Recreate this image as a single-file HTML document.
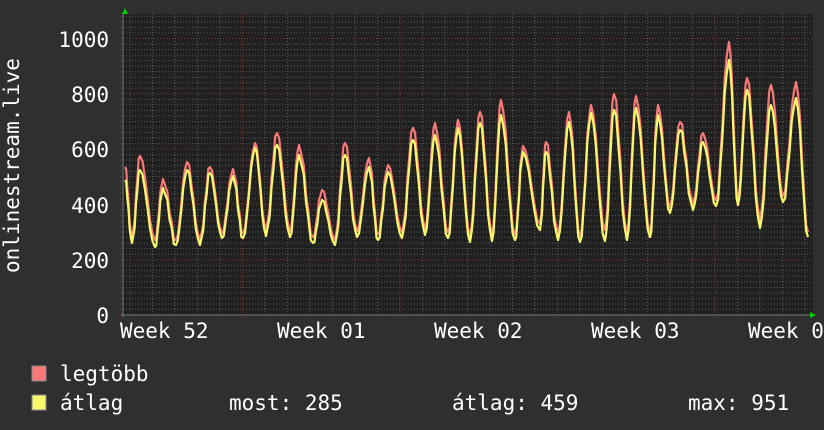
<!DOCTYPE html>
<html><head><meta charset="utf-8"><style>
html,body{margin:0;padding:0;background:#2f2f2f;}
svg{display:block;}
text{font-family:"DejaVu Sans Mono","Liberation Mono",monospace;font-size:21px;fill:#fff;}
</style></head><body>
<svg id="s" width="824" height="430" xmlns="http://www.w3.org/2000/svg">
<rect width="824" height="430" fill="#2f2f2f"/>
<rect x="123" y="14" width="690" height="301" fill="#202020"/>
<g id="grid"></g>
<path id="red" fill="none" stroke="#f87a78" stroke-width="2.2" stroke-linejoin="round"/>
<path id="yel" fill="none" stroke="#f8f86c" stroke-width="2.2" stroke-linejoin="round"/>
<line x1="121" y1="315" x2="813" y2="315" stroke="#7a7a7a" stroke-width="1"/>
<line x1="123" y1="14" x2="123" y2="317" stroke="#7a7a7a" stroke-width="1"/>
<polygon points="122,14 128,14 125,8" fill="#00d000"/>
<polygon points="810,312 810,318 816,315" fill="#00d000"/>
<g text-anchor="end">
<text x="109" y="47">1000</text>
<text x="109" y="102">800</text>
<text x="109" y="157">600</text>
<text x="109" y="213">400</text>
<text x="109" y="268">200</text>
<text x="109" y="323">0</text>
</g>
<text x="120" y="338">Week 52</text>
<text x="277" y="338">Week 01</text>
<text x="434" y="338">Week 02</text>
<text x="591" y="338">Week 03</text>
<text x="748" y="338">Week 0</text>
<text transform="translate(19,273) rotate(-90)">onlinestream.live</text>
<rect x="32" y="366" width="14" height="15" fill="#f87a78" stroke="#888" stroke-width="1"/>
<rect x="32" y="395" width="14" height="15" fill="#f8f86c" stroke="#888" stroke-width="1"/>
<text x="60" y="381">legtöbb</text>
<text x="60" y="410">átlag</text>
<text x="229" y="410">most: 285</text>
<text x="452" y="410">átlag: 459</text>
<text x="688" y="410">max: 951</text>
</svg>
<script>
var g=document.getElementById('grid'),h='';
for(var v=0;v<=1080;v+=20){var y=315-v*0.2765;if(y<14)break;
 if(v%200==0) h+='<line x1="118" x2="813" y1="'+y+'" y2="'+y+'" stroke="#8a3a3a" stroke-dasharray="1,2"/>';
 else h+='<line x1="120" x2="813" y1="'+y+'" y2="'+y+'" stroke="#5a5a5a" stroke-dasharray="1,2"/>';}
for(var k=-5;k<26;k++){var x=242.5+k*22.5;if(x<124||x>812)continue;
 var wk=(k%7==0);
 h+='<line x1="'+x+'" x2="'+x+'" y1="14" y2="'+(wk?319:317)+'" stroke="'+(wk?'#8a3a3a':'#5a5a5a')+'" stroke-dasharray="1,2"/>';}
g.innerHTML=h;
var P=[[125,167,180],[132,238,243],[140,156,170],[155,240,247],[163,179,188],[176,240,245],[187,162,170],[200,240,245],[210,167,173],[222,233,238],[233,169,176],[243,233,238],[255,143,148],[266,230,236],[277,133,145],[290,231,237],[299,145,155],[313,237,243],[322,190,200],[335,240,245],[345,143,155],[357,231,237],[369,158,167],[378,234,240],[388,165,172],[402,232,238],[413,128,140],[425,229,235],[435,123,135],[448,232,238],[458,120,128],[470,236,242],[480,112,123],[492,235,241],[501,100,115],[515,234,240],[523,146,152],[540,224,230],[546,142,152],[558,234,240],[569,112,122],[580,236,242],[591,105,113],[605,230,241],[614,94,110],[627,234,240],[636,96,108],[650,231,237],[658,105,115],[670,207,213],[680,122,130],[693,204,210],[703,133,142],[716,200,206],[729,42,60],[738,199,205],[747,78,90],[760,220,228],[771,85,105],[783,196,202],[796,82,98],[808,232,237]];
function mk(i){var d='M'+P[0][0]+','+P[0][i];
 for(var j=1;j<P.length;j++){var a=P[j-1],b=P[j];
  for(var t=1;t<=6;t++){var f=(1-Math.cos(Math.PI*t/6))/2;
   var n=(t<6)?(Math.sin(j*7.3+t*3.1)*3):0;
   d+=' L'+(a[0]+(b[0]-a[0])*t/6).toFixed(1)+','+(a[i]+(b[i]-a[i])*f+n).toFixed(1);}}
 return d;}
document.getElementById('red').setAttribute('d',mk(1));
document.getElementById('yel').setAttribute('d',mk(2));
</script>
</body></html>
